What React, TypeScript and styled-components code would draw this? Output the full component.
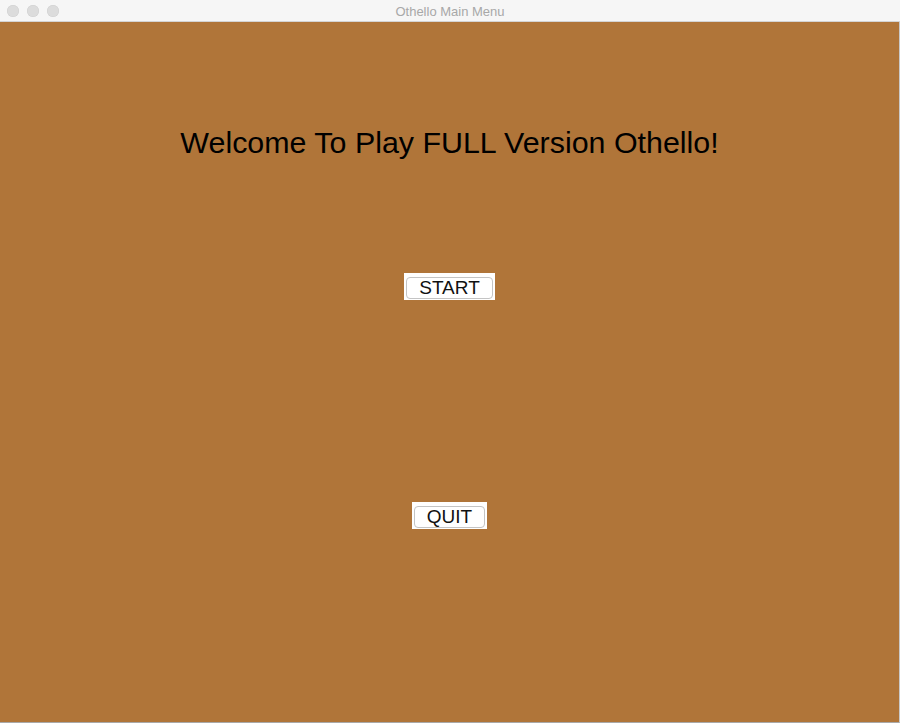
import React from "react";
import styled, { createGlobalStyle } from "styled-components";

const Global = createGlobalStyle`
  html, body { margin: 0; padding: 0; width: 900px; height: 723px; overflow: hidden; background: #b07539; }
  #root { width: 900px; height: 723px; }
`;

const Window = styled.div`
  width: 900px;
  height: 723px;
  display: flex;
  flex-direction: column;
  background: #b07539;
  font-family: "Liberation Sans", Arial, sans-serif;
`;

const TitleBar = styled.div`
  height: 21px;
  flex: 0 0 21px;
  background: #f6f6f6;
  border-bottom: 1px solid #d4d4d4;
  display: grid;
  grid-template-columns: 1fr auto 1fr;
  align-items: center;
  padding: 0 7px;
`;

const Lights = styled.div`
  display: flex;
  gap: 8px;
`;

const Light = styled.span`
  width: 12px;
  height: 12px;
  border-radius: 50%;
  background: #dcdcdc;
  box-shadow: inset 0 0 0 0.5px #cfcfcf;
`;

const Title = styled.div`
  font-size: 13px;
  color: #a8a8a8;
  padding-top: 1px;
`;

const Content = styled.main`
  flex: 1;
  display: flex;
  flex-direction: column;
  align-items: center;
  border-right: 1px solid #c9c9c9;
  border-bottom: 1px solid #a9a9a9;
`;

const Heading = styled.h1`
  margin: 103px 0 0;
  font-size: 30.4px;
  line-height: 34px;
  font-weight: normal;
  color: #000;
`;

const ButtonFrame = styled.div<{ $gap: number }>`
  margin-top: ${(p) => p.$gap}px;
  background: #fff;
  padding: 4px 2px 1px;
  display: flex;
`;

const Button = styled.button`
  height: 22px;
  padding: 0 12px;
  border: 1px solid #c4c4c4;
  border-radius: 4px;
  background: #fff;
  font-family: "Liberation Sans", Arial, sans-serif;
  font-size: 19px;
  line-height: 20px;
  color: #111;
  cursor: pointer;
`;

export default function App() {
  return (
    <>
      <Global />
      <Window>
        <TitleBar>
          <Lights>
            <Light />
            <Light />
            <Light />
          </Lights>
          <Title>Othello Main Menu</Title>
          <div />
        </TitleBar>
        <Content>
          <Heading>Welcome To Play FULL Version Othello!</Heading>
          <ButtonFrame $gap={114}>
            <Button>START</Button>
          </ButtonFrame>
          <ButtonFrame $gap={202}>
            <Button>QUIT</Button>
          </ButtonFrame>
        </Content>
      </Window>
    </>
  );
}
